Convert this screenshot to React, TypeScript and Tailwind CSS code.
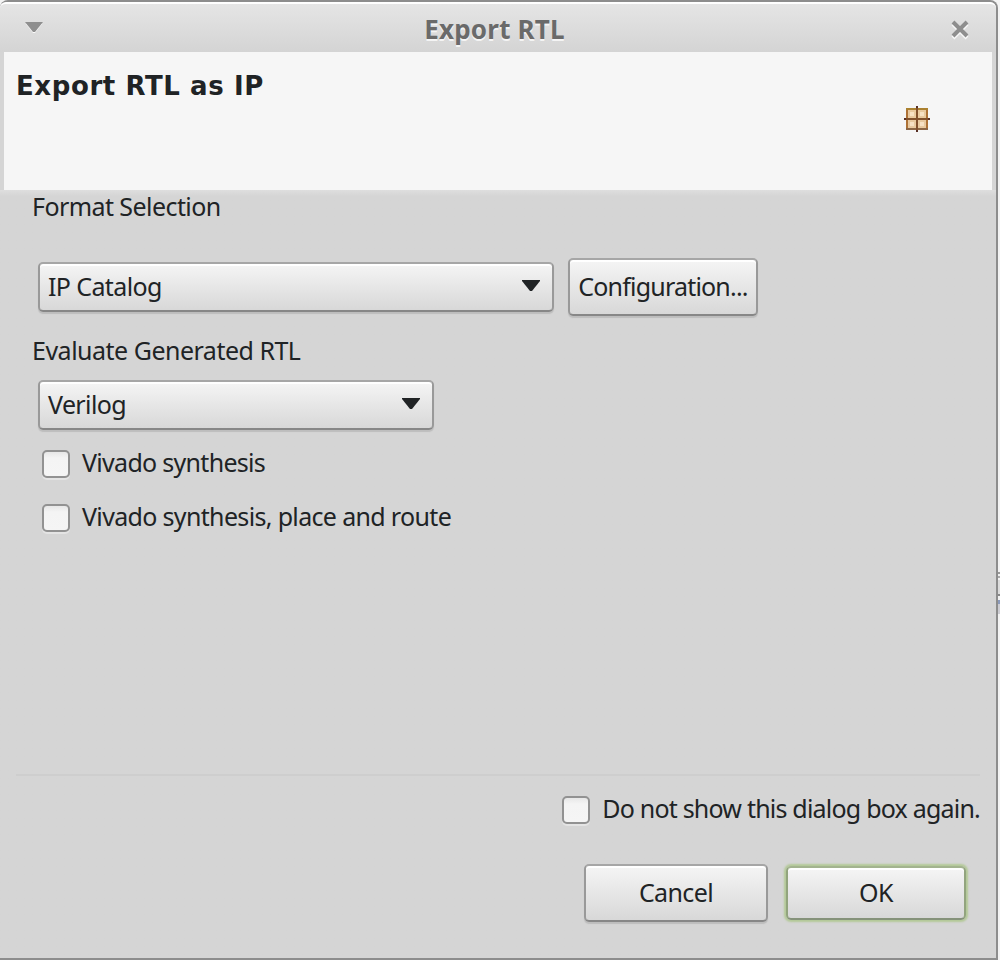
import type { ReactNode } from "react";

function Arrow() {
  return (
    <svg width="18" height="12" viewBox="0 0 18 12" className="mr-px shrink-0 -translate-y-px">
      <path d="M0 0H18V1L10 11H8L0 1Z" fill="#202325" />
    </svg>
  );
}

function Select({ label, className }: { label: string; className: string }) {
  return (
    <button
      className={
        "flex h-[50px] items-center justify-between rounded-[5px] border-2 border-t-[#a6a6a6] border-x-[#999] border-b-[#878787] bg-linear-to-b from-[#f5f5f5] to-[#d8d8d8] pl-2 pr-[11px] shadow-[inset_0_2px_0_#fff,0_2px_1px_#bdbdbd] " +
        className
      }
    >
      <span className="-translate-y-px">{label}</span>
      <Arrow />
    </button>
  );
}

function Button({ children, className }: { children: ReactNode; className: string }) {
  return (
    <button
      className={
        "flex items-center justify-center rounded-[5px] border-2 bg-linear-to-b from-[#f5f5f5] to-[#d8d8d8] " +
        className
      }
    >
      <span className="-translate-y-px">{children}</span>
    </button>
  );
}

function Check({ label, className = "" }: { label: string; className?: string }) {
  return (
    <label className={"flex h-[54px] items-center gap-3 " + className}>
      <span className="size-7 shrink-0 rounded-[5px] border-2 border-[#929292] bg-linear-to-b from-[#e7e7e7] via-[#f4f4f4] via-25% to-[#f5f5f5] shadow-[0_2px_0_#e4e4e4]" />
      <span className="-translate-y-[2px] whitespace-nowrap">{label}</span>
    </label>
  );
}

export default function App() {
  return (
    <div className="flex h-[960px] w-[1000px] overflow-hidden bg-[#f3f3f3] font-['Noto_Sans',sans-serif] text-[25px] leading-[34px] tracking-[-0.62px] text-[#202325]">
      <main className="flex w-[998px] flex-col rounded-t-[8px] border-y-2 border-r-2 border-[#8d8d8d] bg-[#d5d5d5]">
        <header className="flex h-[50px] shrink-0 items-center rounded-t-[6px] border-t-2 border-white bg-linear-to-b from-[#e5e5e5] to-[#d4d4d4] pl-[25px] pr-[27px]">
          <svg width="18" height="12" viewBox="0 0 18 12">
            <path d="M1 2H17L10 11H8Z" fill="#fafafa" />
            <path d="M0 0H18L10 10H8Z" fill="#8f8f8f" />
          </svg>
          <h1 className="flex-1 translate-y-px pr-[5px] text-center text-[26px] font-bold tracking-[0.2px] text-[#6a6a6a] [text-shadow:0_2px_0_#f4f4f4]">Export RTL</h1>
          <svg width="18" height="20" viewBox="0 0 18 20" className="translate-y-[2px]">
            <path d="M2 4L16 18M16 4L2 18" stroke="#f8f8f8" strokeWidth="4" />
            <path d="M2 2L16 16M16 2L2 16" stroke="#8e8e8e" strokeWidth="4" />
          </svg>
        </header>
        <section className="ml-1 mr-1 flex h-[138px] shrink-0 justify-between bg-[#f6f6f6] pl-3 pr-[62px]">
          <h2 className="mt-[17px] font-['DejaVu_Sans',sans-serif] text-[26px] font-bold tracking-[0.6px]">Export RTL as IP</h2>
          <svg width="26" height="26" viewBox="0 0 26 26" className="mt-[54px]">
            <rect x="3" y="3" width="20" height="20" fill="#e8c9a0" stroke="#ad7136" strokeWidth="2" />
            <path d="M2 3H24" stroke="#ab8130" strokeWidth="2" />
            <path d="M2 23H24" stroke="#8b6545" strokeWidth="2" />
            <path d="M6 6h4v4H6ZM16 6h4v4h-4ZM6 16h4v4H6ZM16 16h4v4h-4Z" fill="#f7e1c4" />
            <path d="M13 0V26M0 13H26" stroke="#80502d" strokeWidth="2" />
            <path d="M13 0V2M13 24V26M0 13H2M24 13H26" stroke="#583025" strokeWidth="2" />
          </svg>
        </section>
        <section className="flex flex-1 flex-col bg-linear-to-b from-[#dedede] to-[#d5d5d5] to-[6px] pl-8 pr-4">
          <p className="-translate-y-px tracking-[-0.57px]">Format Selection</p>
          <div className="mt-[34px] flex h-[58px] items-center gap-[14px] pl-[6px]">
            <Select label="IP Catalog" className="w-[516px]" />
            <Button className="h-[58px] w-[190px] border-t-[#a6a6a6] border-x-[#999] border-b-[#878787] tracking-[-0.8px] shadow-[inset_0_2px_0_#fff,0_2px_1px_#bdbdbd]">Configuration...</Button>
          </div>
          <p className="mt-[18px] -translate-y-px tracking-[-0.5px]">Evaluate Generated RTL</p>
          <div className="mt-3 flex pl-[6px]">
            <Select label="Verilog" className="w-[396px]" />
          </div>
          <div className="mt-[7px] flex flex-col pl-[10px]">
            <Check label="Vivado synthesis" className="tracking-[-0.7px]" />
            <Check label="Vivado synthesis, place and route" className="tracking-[-0.66px]" />
          </div>
          <div className="-ml-4 mt-auto border-t-2 border-[#cecece] shadow-[inset_0_2px_0_#d9d9d9]" />
          <div className="mt-[7px] flex justify-end">
            <Check label="Do not show this dialog box again." className="tracking-[-0.79px]" />
          </div>
          <div className="mb-[36px] mt-[27px] flex h-[58px] items-center justify-end gap-[18px] pr-[14px]">
            <Button className="h-[58px] w-[184px] border-t-[#a6a6a6] border-x-[#999] border-b-[#878787] shadow-[inset_0_2px_0_#fff,0_2px_1px_#bdbdbd]">Cancel</Button>
            <Button className="h-[54px] w-[180px] border-x-[#92a47e] border-t-[#a3b38f] border-b-[#85927a] shadow-[inset_0_2px_0_#fff,0_0_2px_2px_#b3c997]">OK</Button>
          </div>
        </section>
      </main>
      <div className="flex w-[2px] flex-col pt-[572px]">
        <i className="h-[2px] bg-[#999]" />
        <i className="mt-[2px] h-[2px] bg-[#aaa]" />
        <i className="mt-[2px] h-[14px] bg-[#dcdcdc]" />
        <i className="h-[2px] bg-[#888]" />
        <i className="mt-1 h-1 bg-[#8c9bbc]" />
        <i className="h-[10px] bg-[#cdcdd3]" />
      </div>
    </div>
  );
}
